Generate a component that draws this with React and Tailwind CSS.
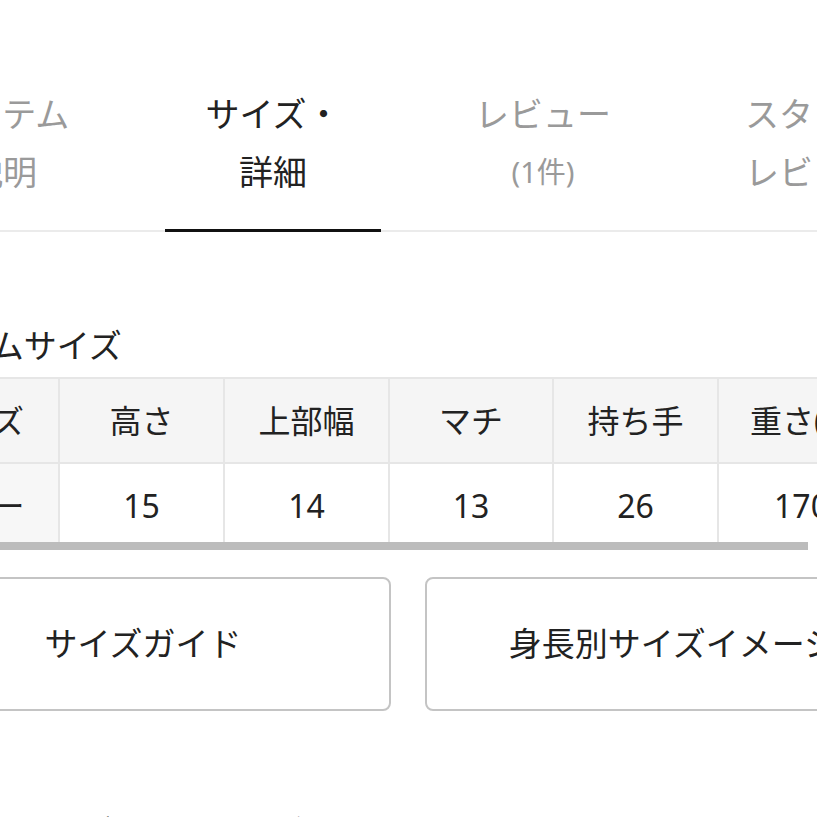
import React from "react";

const tabs = [
  { top: "アイテム", bottom: "説明", active: false },
  { top: "サイズ・", bottom: "詳細", active: true },
  { top: "レビュー", bottom: "(1件)", active: false, small: true },
  { top: "スタッフ", bottom: "レビュー", active: false },
];

const headers = ["サイズ", "高さ", "上部幅", "マチ", "持ち手", "重さ(g)"];
const values = ["フリー", "15", "14", "13", "26", "170"];

export default function App() {
  return (
    <div
      className="w-[817px] h-[817px] overflow-hidden bg-white text-[#222]"
      style={{ fontFamily: '"Noto Sans", "Noto Sans CJK JP", sans-serif' }}
    >
      <div className="ml-[-105px] w-[1100px]">
        {/* tabs */}
        <div className="pt-[85px] border-b-2 border-[#ebebeb] flex gap-[54px]">
          {tabs.map((t) => (
            <div
              key={t.top}
              className={`w-[216px] shrink-0 flex flex-col items-center pb-[28px] -mb-[2px] border-b-[3px] ${
                t.active ? "border-[#111] text-[#222]" : "border-transparent text-[#9a9a9a]"
              }`}
            >
              <span className="text-[34px] leading-[58px]">{t.top}</span>
              <span className={`${t.small ? "text-[29px]" : "text-[34px]"} leading-[58px]`}>
                {t.bottom}
              </span>
            </div>
          ))}
        </div>

        {/* section title */}
        <div className="mt-[92px] text-[33px] leading-[44px]">アイテムサイズ</div>

        {/* size table */}
        <div className="relative mt-[9px]">
          <div className="grid grid-cols-[165px_165px_165px_164px_165px_165px] w-max border-t-2 border-[#e6e6e6]">
            {headers.map((h, i) => (
              <div
                key={h}
                className={`h-[85px] flex items-center justify-center bg-[#f5f5f5] text-[32px] border-b-2 border-[#e6e6e6] ${
                  i < headers.length - 1 ? "border-r-2" : ""
                }`}
              >
                {h}
              </div>
            ))}
            {values.map((v, i) => (
              <div
                key={i}
                className={`h-[85px] flex items-center justify-center text-[32px] pb-[2px] ${
                  i === 0 ? "bg-[#f7f7f7]" : "bg-white"
                } ${i < values.length - 1 ? "border-r-2 border-[#e6e6e6]" : ""}`}
              >
                {v}
              </div>
            ))}
          </div>
          {/* scrollbar */}
          <div className="absolute left-[105px] bottom-[-1px] w-[808px] h-[8px] bg-[#bcbcbc]" />
        </div>

        {/* buttons */}
        <div className="mt-[28px] flex gap-[34px]">
          <div className="w-[496px] h-[134px] shrink-0 rounded-[8px] border-2 border-[#c4c4c4] flex items-center justify-center text-[33px]">
            サイズガイド
          </div>
          <div className="w-[496px] h-[134px] shrink-0 rounded-[8px] border-2 border-[#c4c4c4] flex items-center justify-center text-[33px]">
            身長別サイズイメージ
          </div>
        </div>

        <div className="mt-[99px] pl-[185px] text-[32px] leading-[44px]">
          ブランドサイズ表記について
        </div>
      </div>
    </div>
  );
}
